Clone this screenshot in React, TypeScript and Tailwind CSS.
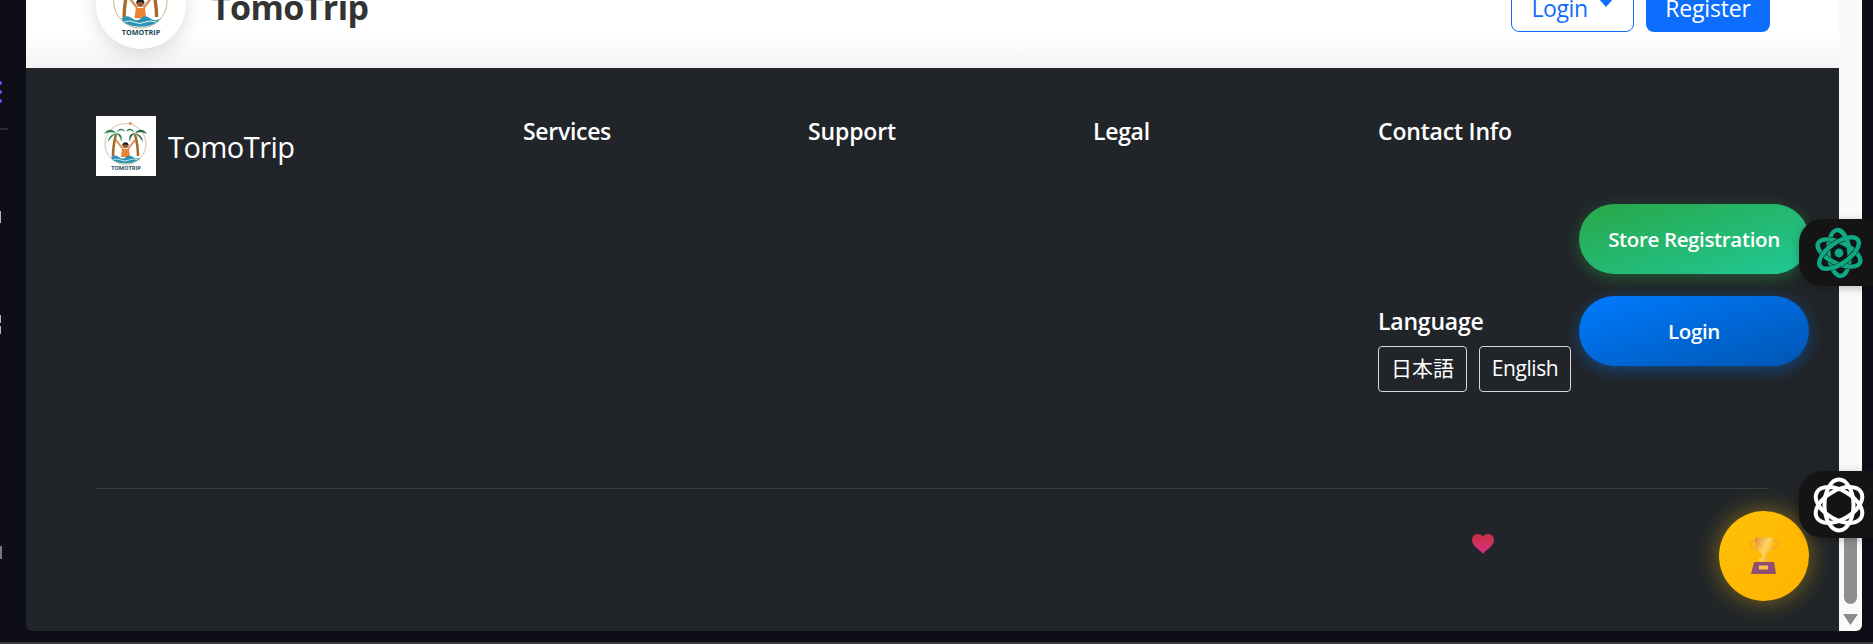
import React from 'react'

const sans = { fontFamily: '"Open Sans", "Noto Sans CJK JP", sans-serif' }

function Logo({ className }: { className?: string }) {
  return (
    <svg viewBox="0 0 60 60" className={className}>
      <circle cx="29.5" cy="28" r="20.5" fill="none" stroke="#c9a27e" strokeWidth="0.7" />
      <path d="M33 11 L33 6 L37 7 L33 9" fill="#c98f55" />
      {/* trunks */}
      <path d="M17 40 C17 32 18 26 20 18" fill="none" stroke="#a8692c" strokeWidth="2.6" />
      <path d="M42 40 C42 32 41 26 39 18" fill="none" stroke="#a8692c" strokeWidth="2.6" />
      {/* fronds */}
      <path d="M20 17 C16 12 11 13 8 18 C12 16 16 16 20 17 C16 18 12 21 12 26 C15 21 18 19 20 17 C22 19 25 21 25 26 C27 21 25 17 20 17 C23 14 26 13 29 16 C27 11 23 12 20 17Z" fill="#2a8558" />
      <path d="M39 17 C43 12 48 13 51 18 C47 16 43 16 39 17 C43 18 47 21 47 26 C44 21 41 19 39 17 C37 19 34 21 34 26 C32 21 34 17 39 17 C36 14 33 13 30 16 C32 11 36 12 39 17Z" fill="#1f6f49" />
      {/* figure */}
      <path d="M20 24 L27 33 M39 24 L32 33" stroke="#d98a4f" strokeWidth="1.8" fill="none" />
      <path d="M26 33 H33 L34 41 H25Z" fill="#ea8433" />
      <circle cx="29.5" cy="29.5" r="2.8" fill="#9a5c33" />
      <path d="M26.4 30 C25.6 25 33.4 25 32.6 30 C31 28 28 28 26.4 30Z" fill="#1d1d22" />
      {/* waves */}
      <path d="M15 41 Q19 38 23 41 T30 41 T37 41 T45 41 L42 44.5 Q36 47.5 29.5 47.5 Q23 47.5 17 44.5Z" fill="#2b93b3" />
      <path d="M17 44 Q21 42 25 44 T33 44 T42 44" fill="none" stroke="#fff" strokeWidth="0.7" />
      <text x="30" y="54" textAnchor="middle" fontSize="5.6" fontWeight="700" fill="#1d4a58" fontFamily="Open Sans, sans-serif">TOMOTRIP</text>
    </svg>
  )
}

function Trophy() {
  return (
    <svg viewBox="0 0 30 38" className="h-[38px] w-[30px]">
      <defs>
        <linearGradient id="cup" x1="0" y1="0" x2="1" y2="0.6">
          <stop offset="0" stopColor="#e8883a" />
          <stop offset="0.6" stopColor="#ffd75e" />
          <stop offset="1" stopColor="#f6a83a" />
        </linearGradient>
      </defs>
      <path d="M7 4 H3 C0 5 1 11 8 13 M23 4 H27 C30 5 29 11 22 13" fill="none" stroke="#f3a92f" strokeWidth="1.6" />
      <path d="M6 0.5 H24 C24 9 22 15 17 17 V21 H20 V24 H10 V21 H13 V17 C8 15 6 9 6 0.5Z" fill="url(#cup)" />
      <path d="M5 25 H25 L27 37 H2Z" fill="#8f4f70" />
      <rect x="10" y="28.5" width="9" height="4" fill="#f7c251" />
    </svg>
  )
}

function Heart() {
  return (
    <svg viewBox="0 0 22 20" className="h-[20px] w-[22px]">
      <defs>
        <linearGradient id="heart" x1="0" y1="0" x2="0" y2="1">
          <stop offset="0" stopColor="#c9303f" />
          <stop offset="1" stopColor="#d6308c" />
        </linearGradient>
      </defs>
      <path d="M11 20 C8 15.5 0 12 0 6.5 C0 2.5 2.5 0 6 0 C8.5 0 10 1 11 2.5 C12 1 13.5 0 16 0 C19.5 0 22 2.5 22 6.5 C22 12 14 15.5 11 20Z" fill="url(#heart)" />
    </svg>
  )
}

function AtomIcon() {
  const angles = [85, 25, 145]
  return (
    <svg viewBox="0 0 54 56" className="h-[56px] w-[54px]" fill="none">
      {angles.map((a) => (
        <g key={a} transform={`rotate(${a} 27 28)`}>
          <ellipse cx="27" cy="28" rx="23" ry="10.5" stroke="#141414" strokeWidth="5.4" />
          <ellipse cx="27" cy="28" rx="23" ry="10.5" stroke="#0fa882" strokeWidth="4.4" />
        </g>
      ))}
      {/* first loop goes back over the last one */}
      <g transform="rotate(85 27 28)">
        <path d="M4 28 A23 10.5 0 0 1 27 17.5" stroke="#0fa882" strokeWidth="4.4" />
      </g>
      <circle cx="27" cy="28" r="4.4" fill="#0fa882" />
    </svg>
  )
}

function FlowerIcon() {
  return (
    <svg viewBox="0 0 54 56" className="h-[56px] w-[54px]" fill="none" stroke="#fff" strokeWidth="4">
      <ellipse cx="27" cy="28" rx="25.5" ry="14.5" transform="rotate(90 27 28)" />
      <ellipse cx="27" cy="28" rx="25.5" ry="14.5" transform="rotate(30 27 28)" />
      <ellipse cx="27" cy="28" rx="25.5" ry="14.5" transform="rotate(150 27 28)" />
    </svg>
  )
}

export default function App() {
  return (
    <div className="relative flex h-[644px] w-full flex-col overflow-hidden bg-[#0d0e17]" style={sans}>
      <div className="flex h-[631px]">
        {/* what is left of the sidebar behind the window */}
        <div className="flex w-[26px] shrink-0 flex-col">
          <div className="mt-[81px] flex flex-col gap-[5px]">
            <span className="h-[4px] w-[2px] rounded-r-full bg-[#6a5cf0]" />
            <span className="h-[4px] w-[2px] rounded-r-full bg-[#6a5cf0]" />
            <span className="h-[4px] w-[2px] rounded-r-full bg-[#6a5cf0]" />
          </div>
          <div className="mt-[25px] h-[2px] w-[8px] bg-[#2b2c33]" />
          <div className="mt-[81px] h-[12px] w-[1px] bg-[#b5b5b8]" />
          <div className="mt-[92px] h-[8px] w-[1px] bg-[#b5b5b8]" />
          <div className="mt-[3px] h-[8px] w-[1px] bg-[#b5b5b8]" />
          <div className="mt-[212px] h-[13px] w-[2px] bg-[#77777c]" />
        </div>

        <div className="flex min-w-0 flex-1 overflow-hidden rounded-b-[6px]">
          <main className="flex min-w-0 flex-1 flex-col">
            <header className="flex h-[68px] shrink-0 items-start justify-between overflow-hidden bg-gradient-to-b from-white from-50% to-[#f3f3f3] pr-[69px] pl-[70px]">
              <div className="flex items-start">
                <div className="-mt-[41px] flex h-[90px] w-[90px] items-center justify-center rounded-full bg-white shadow-[0_5px_20px_rgba(0,0,0,0.14)]">
                  <Logo className="h-[78px] w-[78px]" />
                </div>
                <span className="-mt-[19px] ml-[25px] text-[34px] leading-[52px] font-bold tracking-[-0.6px] text-[#333]">TomoTrip</span>
              </div>
              <div className="flex items-start gap-[12px]">
                <button className="-mt-[16px] flex h-[48px] w-[123px] items-center justify-center gap-[10px] rounded-[8px] border border-[#0d6efd] bg-white text-[23px] tracking-[-0.4px] text-[#0d6efd]">
                  Login
                  <svg viewBox="0 0 16 9" className="-mt-[11px] h-[9px] w-[16px]">
                    <path d="M0 0 H16 L8 9Z" fill="#0d6efd" />
                  </svg>
                </button>
                <button className="-mt-[16px] h-[48px] w-[124px] rounded-[8px] bg-[#0d6efd] text-[23px] tracking-[-0.2px] text-white">Register</button>
              </div>
            </header>

            <footer className="flex flex-1 flex-col bg-[#212529] px-[70px] text-white">
              <div className="grid h-[372px] shrink-0 grid-cols-[427px_285px_285px_285px_1fr] pt-[48px]">
                <div className="flex items-start gap-[12px]">
                  <div className="h-[60px] w-[60px] bg-white">
                    <Logo className="h-[60px] w-[60px]" />
                  </div>
                  <span className="mt-[13px] text-[29px] leading-[36px] font-medium tracking-[-0.5px]">TomoTrip</span>
                </div>
                <h5 className="text-[23px] leading-[30px] font-semibold tracking-[-0.3px]">Services</h5>
                <h5 className="text-[23px] leading-[30px] font-semibold tracking-[-0.15px]">Support</h5>
                <h5 className="text-[23px] leading-[30px] font-semibold tracking-[-0.3px]">Legal</h5>
                <div className="flex flex-col items-start">
                  <h5 className="text-[23px] leading-[30px] font-semibold tracking-[-0.2px] whitespace-nowrap">Contact Info</h5>
                  <h5 className="mt-[160px] text-[23px] leading-[30px] font-semibold tracking-[-0.2px]">Language</h5>
                  <div className="mt-[10px] flex gap-[12px]">
                    <button className="h-[46px] w-[89px] rounded-[4px] border border-[#d5d7d9] text-[21px]">日本語</button>
                    <button className="h-[46px] w-[92px] rounded-[4px] border border-[#d5d7d9] text-[21px] tracking-[-0.4px]">English</button>
                  </div>
                </div>
              </div>
              <div className="mt-[48px] h-px bg-[#383c40]" />
              <div className="mt-[45px] flex pl-[1376px]">
                <Heart />
              </div>
            </footer>
          </main>

          {/* browser scrollbar */}
          <div className="flex w-[23px] shrink-0 flex-col items-center justify-end bg-[#fafafa] pb-[6px]">
            <div className="h-[124px] w-[13px] rounded-b-full bg-[#8f8f8f]" />
            <svg viewBox="0 0 15 11" className="mt-[10px] h-[11px] w-[15px]">
              <path d="M0 0 H15 L7.5 11Z" fill="#8a8a8a" />
            </svg>
          </div>
        </div>
        <div className="w-[11px] shrink-0" />
      </div>
      <div className="mt-auto h-[2px] bg-[#3a3a3c]" />

      {/* floating buttons */}
      <button className="absolute top-[204px] right-[64px] h-[70px] w-[230px] rounded-full bg-gradient-to-br from-[#28a745] to-[#20c997] pt-[1px] text-[20.5px] font-semibold tracking-[-0.35px] text-white shadow-[0_4px_15px_rgba(40,167,69,0.4)]">
        Store Registration
      </button>
      <button className="absolute top-[296px] right-[64px] h-[70px] w-[230px] rounded-full bg-gradient-to-br from-[#007bff] to-[#0056b3] pt-[1px] text-[20.5px] font-semibold tracking-[-0.35px] text-white shadow-[0_4px_15px_rgba(0,123,255,0.4)]">
        Login
      </button>
      <div className="absolute top-[511px] right-[64px] flex h-[90px] w-[90px] items-center justify-center rounded-full bg-gradient-to-br from-[#ffc107] to-[#ffb300] shadow-[0_0_25px_rgba(255,193,7,0.45)]">
        <Trophy />
      </div>
      <div className="absolute top-[219px] right-0 flex h-[67px] w-[74px] items-center rounded-l-[24px] bg-[#141414] pl-[13px] shadow-[0_2px_10px_rgba(0,0,0,0.25)]">
        <AtomIcon />
      </div>
      <div className="absolute top-[471px] right-0 flex h-[67px] w-[74px] items-center rounded-l-[24px] bg-[#141414] pl-[13px] shadow-[0_2px_10px_rgba(0,0,0,0.25)]">
        <FlowerIcon />
      </div>
    </div>
  )
}
